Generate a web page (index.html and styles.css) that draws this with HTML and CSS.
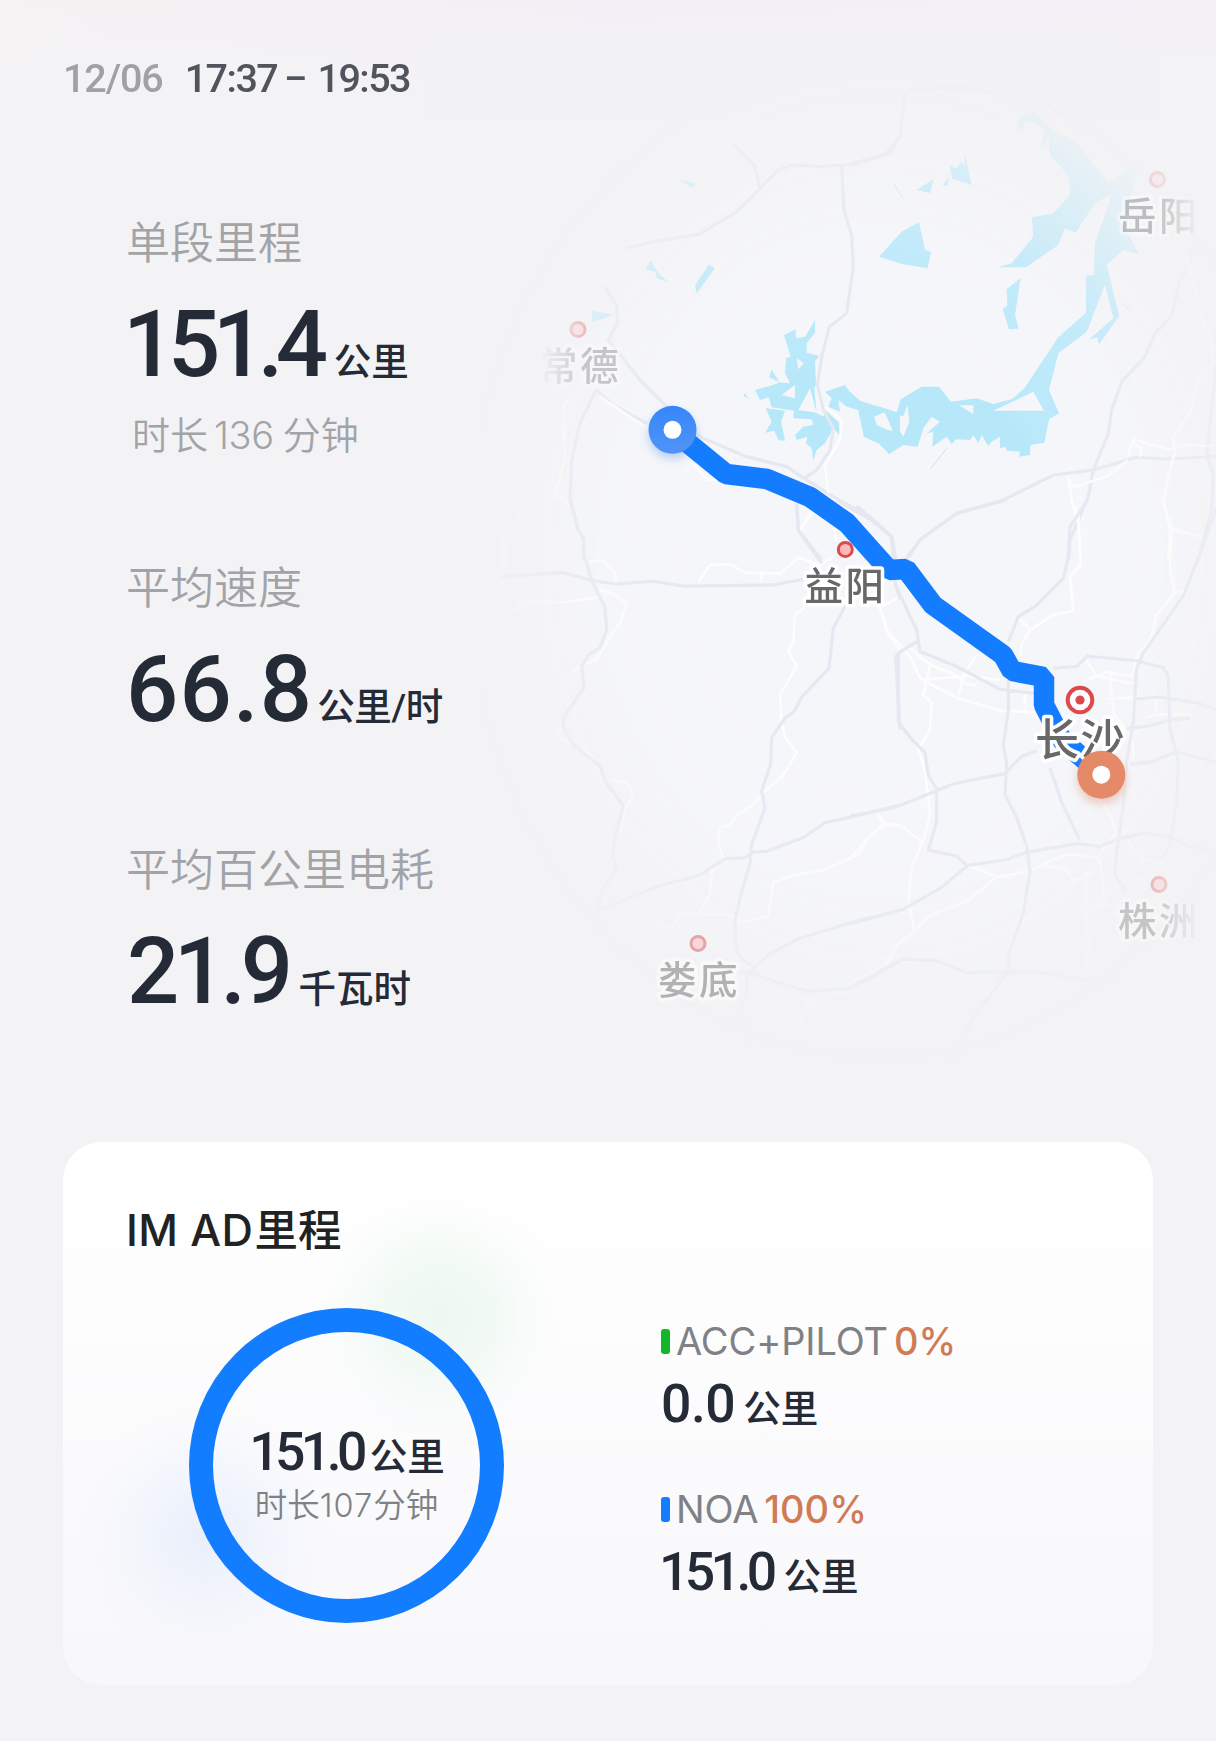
FILE: index.html
```html
<!DOCTYPE html>
<html lang="zh-CN">
<head>
<meta charset="UTF-8">
<meta name="viewport" content="width=device-width, initial-scale=1.0">
<title>行程详情</title>
<link rel="stylesheet" href="styles.css">
</head>
<body>
<svg class="map" viewBox="480 40 736 1080" width="736" height="1080">
    <defs>
        <radialGradient id="fade" gradientUnits="userSpaceOnUse" cx="0" cy="0" r="1" gradientTransform="translate(880 560) scale(430 515)">
            <stop offset="0.4" stop-color="#fff"/>
            <stop offset="0.65" stop-color="#fff" stop-opacity="0.8"/>
            <stop offset="0.8" stop-color="#fff" stop-opacity="0.42"/>
            <stop offset="0.9" stop-color="#fff" stop-opacity="0.2"/>
            <stop offset="1" stop-color="#fff" stop-opacity="0"/>
        </radialGradient>
        <linearGradient id="sides" gradientUnits="userSpaceOnUse" x1="540" y1="0" x2="1200" y2="0">
            <stop offset="0" stop-color="#fff" stop-opacity="0"/>
            <stop offset="0.07" stop-color="#fff"/>
            <stop offset="0.93" stop-color="#fff"/>
            <stop offset="1" stop-color="#fff" stop-opacity="0"/>
        </linearGradient>
        <linearGradient id="startFill" x1="0" y1="0" x2="0" y2="1">
            <stop offset="0" stop-color="#3787fa"/>
            <stop offset="1" stop-color="#5093f6"/>
        </linearGradient>
        <mask id="mapMask" maskUnits="userSpaceOnUse" x="480" y="40" width="736" height="1080">
            <rect x="480" y="40" width="736" height="1080" fill="url(#fade)"/>
        </mask>
        <mask id="labelMask" maskUnits="userSpaceOnUse" x="480" y="40" width="736" height="1080">
            <rect x="480" y="40" width="736" height="1080" fill="url(#sides)"/>
        </mask>
    </defs>

    <g mask="url(#mapMask)">
        <rect x="480" y="40" width="736" height="1080" fill="#f5f6fa"/>

        <!-- north west tile -->
        <g transform="translate(500 60) scale(0.33333)">
            <g class="water">
                <path d="M852 825L887 808L888 835L915 830L945 780V818L920 850V878L957 887L945 905L948 975L943 985L950 1060L972 1070L975 1050L1015 1085L1022 1130L1000 1105L975 1150L950 1170L940 1203L935 1165L918 1150L922 1130L890 1140L885 1125L910 1100L940 1095L935 1078L880 1075L882 1052L815 1042L806 1012L780 1020L765 990L820 975L838 967L870 970L855 940L858 895L872 890ZM890 895L912 910L895 928ZM885 975L845 1005L885 1015ZM930 985L895 1050L950 1058Z" fill-rule="evenodd"/>
                <path d="M815 928L838 967L808 952ZM797 1045L855 1052L843 1085L855 1142L835 1140L823 1112L795 1118L815 1085ZM730 1008L735 1000L744 1015Z"/>
                <path d="M975 995L1035 975L1070 1025L1140 1040L1200 1060V1160L1165 1182L1150 1155L1092 1130L1075 1050L1040 1040L1015 1020L1020 1055L985 1040L995 1015ZM1122 1070L1152 1055L1185 1115L1130 1100Z" fill-rule="evenodd"/>
                <path d="M452 600L475 640L505 667L470 655L468 637L436 628ZM627 614L645 625L590 700L585 675ZM275 752L342 764L276 787ZM530 355L587 370L580 386Z"/>
            </g>
            <g class="road">
                <path d="M380 565L460 545L600 522L710 455L780 385L835 330L875 315L960 320L1070 312L1170 280L1200 230M700 250L765 320L780 385M1025 318L1032 450L1055 525L1060 620L1040 760L988 800L965 890L952 975L970 1050L1000 1105L990 1170L950 1230L912 1255M315 680L350 740L352 790L325 840L420 960L495 1035L600 1130L740 1190L860 1220L912 1255L1000 1310L1110 1370L1175 1430L1185 1500M288 990L340 1035L440 1090M288 990L240 1090L215 1200L210 1310L235 1410L252 1440V1500M890 1330L895 1410L965 1500"/>
            </g>
            <g class="street">
                <path d="M210 1010L190 1040L195 1200L165 1300L200 1330M300 1010L450 1110M580 1210L620 1258L650 1260M975 1040L1025 1080L1020 1140L975 1215L985 1300M940 1355L900 1410M1000 1400L1010 1445"/>
            </g>
        </g>

        <!-- north east tile -->
        <g transform="translate(850 60) scale(0.33333)">
            <g class="water">
                <path d="M503 180L545 147L600 205L680 245L775 370L870 308L840 420L805 475L870 585L820 570L770 615L808 768L747 853L742 832L718 838L790 775L765 675L710 815L625 880L597 990L627 1060L597 1078L583 1148L542 1155L540 1185L508 1190L510 1175L470 1172L468 1160L450 1165V1130L425 1145L415 1158L395 1125L385 1150L370 1125L360 1140L318 1138L305 1152L290 1130L247 1160L250 1115L230 1120L270 1085L245 1070L220 1105L203 1160L160 1155L118 1182L85 1150L42 1130L25 1050L0 1035V995L30 1022L108 1048L160 1130L178 1085L173 1035L160 1068L137 1066L152 1018L215 980H267L303 1025L380 1015L430 1032L487 1017L523 985L625 832L708 758V648L732 645L735 550L788 400L735 430L677 518L645 505L625 555L528 622L445 622L485 610L550 530L545 472L610 460L660 405L658 350L600 285L595 230L572 270L585 210L550 187L525 185L522 208L505 207ZM72 1070L105 1055L130 1118L80 1095ZM327 1036H370V1062ZM430 1052L550 995L582 1052Z" fill-rule="evenodd"/>
                <path d="M87 590L155 515L207 487L225 570L243 575L233 625L155 612ZM470 688L512 653L495 765L506 806L477 808L458 748L472 735ZM298 315L318 325L335 305L342 320L345 283L365 374L307 356ZM200 390L252 356L240 399ZM278 376L295 352L294 378Z"/>
            </g>
            <path class="thread" d="M130 368L158 415M243 1225L290 1165M820 735L838 748"/>
            <g class="road">
                <path d="M0 312L110 280L150 230L165 100L180 90L330 80L460 105L540 95L690 210M1025 560L1015 630L990 660L965 770L915 820L885 890L815 965L785 1050L775 1120L730 1230L715 1310L660 1440L655 1500M1098 920L1070 1190L1090 1240L1085 1350L1045 1500M0 1345L60 1375L125 1432L132 1500M170 1500L210 1440L320 1360L460 1320L610 1245L730 1230L860 1192L940 1197L1098 1190"/>
            </g>
            <g class="street">
                <path d="M1000 540L1020 630L1050 760L1085 840V915L1040 970L1025 1050L970 1130L975 1175L955 1250L940 1320L960 1410L955 1500M995 665L1070 697M1098 1158L1010 1155L960 1168L910 1155L850 1138L835 1185M845 1150L875 1165L870 1190M835 1200L770 1250L670 1280L655 1255L665 1320L685 1390L692 1500M960 1410L1055 1430"/>
            </g>
        </g>

        <!-- south west tile -->
        <g transform="translate(500 500) scale(0.33333 0.38268)">
            <g class="street">
                <path d="M270 160L310 158L345 190L350 215M300 235L340 245L380 270L360 320L325 365L290 415L245 435L215 450M30 290L100 265L200 267L290 255M185 590L175 620L270 665M330 730L385 740L400 770L375 810L360 870M595 215L630 170L690 168L735 190L840 192L895 150L960 170L1005 145M785 195V215M935 30L900 75M915 280L885 300L880 370L865 395L890 435L840 510L845 580L855 620L890 660L850 720L790 765L755 800L715 820L690 850L660 855L655 900L670 935L635 970L630 1030L600 1075M310 1140L390 1110L520 1115L535 1080L680 1083L730 1103L805 1088L820 1000L880 980L960 970L1080 925L1095 890L1150 850L1135 820M1150 850H1200M530 1090L545 1140M1140 280L1165 350L1200 395M920 1290L925 1320L880 1400L850 1450L790 1480M930 1320L1040 1280L1160 1215L1200 1155M625 1300V1340L740 1390M1140 280L1195 255"/>
            </g>
            <g class="road">
                <path d="M210 0L235 80L252 100L250 140L275 210L315 280L320 340L300 385L265 405L245 435L252 490L190 570V595L220 640L300 695L315 735L370 800L345 880L338 930L350 960L300 1030L285 1120M0 200L190 190L275 210L350 220L460 212L550 225L820 222L910 207M1040 270L1000 335L987 440L905 515L885 550L855 570L815 620L812 690L785 760L795 805L755 900L750 950L720 1040L705 1100L708 1170L720 1195L762 1222L740 1250V1290L725 1330L735 1370L755 1450L762 1520M290 1075L470 1010L600 980L675 937L735 935L760 920L800 918L910 882L975 843L1070 825L1200 797M762 1222L810 1185L900 1145L1070 1100L1200 1072M715 1233L762 1238L830 1260L920 1283L1040 1278L1110 1250L1200 1205M725 1330L680 1385L600 1445M890 10L895 80L965 165M1010 0L1110 50L1175 95L1187 155M1175 180L1200 260M1200 395L1187 410L1200 600"/>
            </g>
        </g>

        <!-- south east tile -->
        <g transform="translate(850 500) scale(0.33333 0.38268)">
            <g class="street">
                <path d="M662 0L685 40L692 170L660 200L670 290L610 300L540 340L515 375L510 405M510 310L540 340M85 270L110 340L180 410L210 465L250 485L330 520L450 550L555 555M175 385L240 430L310 455L350 480L380 485M240 430L220 510L245 530L240 600L205 650L225 710L240 820L220 890L185 960L175 1050L190 1110L190 1130L130 1170L100 1220L0 1260M380 405L345 450L325 510M215 470L350 460L450 470M525 500V550M0 935L60 880L100 845L150 850L220 895M85 820L100 845M355 955L440 985L540 970L610 940L660 925L740 935L800 870L780 820L745 780M440 985L350 1050L240 1085L190 1130M580 955L650 965L670 995L730 975M710 970L705 1080L715 1150L710 1250M750 940L765 1050L720 1065M935 0L965 70L960 180L975 240L920 300L900 370L865 400L845 460L770 450L700 475M710 420L740 460L850 480M780 450L790 560L830 600L850 640V680M770 520L850 515L920 520L915 560H1030M965 240H1000M965 75L1050 95M890 570L920 560M830 890L880 940L960 950L1010 1000M830 1010L890 985L880 940M790 1060L740 1065"/>
            </g>
            <g class="road">
                <path d="M20 15L125 95L130 150M170 150L215 100L320 35L470 0M712 0L660 70L655 150L640 205L560 275L505 305L475 370M135 220L200 340L210 395L320 435L450 495L555 505M200 370L145 400V580L185 625L225 660L235 720L260 755V840L235 915L320 930L350 955L470 940L530 920L685 898L750 905L810 885L880 870L960 880L1020 905L1098 915M475 470V550L460 640L470 690L465 770L500 830L530 905L540 970L520 1080L475 1190V1230L390 1330L315 1430L290 1520M0 825L130 805L310 742L330 738L465 715L515 670L560 655M600 700L635 790L690 890M610 440L680 435L712 408L860 420L940 438L955 460L960 600L985 680L980 790L960 900L935 940M1098 25L1050 140L1000 250L880 400L860 440L850 580L830 680L820 800L800 920L795 980L825 1020M850 520L930 515L1040 530L1098 548M830 598L900 590L960 575L1020 570M840 690L900 685L980 658L1098 685M0 1108L160 1070L270 1015L350 957M0 1275L155 1200L255 1203L350 1235L470 1233L560 1233L700 1253L810 1250"/>
            </g>
        </g>
    </g>
    <path class="route" d="M672 430L726 474L767 479L810 497L847 523L889 570L906 569L933 605L1003 655L1012 671L1044 677V705L1062 740L1101 774"/>

    <g mask="url(#labelMask)">
        <g class="city faint">
            <circle cx="1157.5" cy="179.5" r="7"/>
            <text class="dim" x="1118" y="229.5">岳阳</text>
        </g>
        <g class="city dim">
            <circle cx="578" cy="329.5" r="7"/>
            <text x="539" y="379.5">常德</text>
        </g>
        <g class="city">
            <circle cx="845.3" cy="549.5" r="7"/>
            <text x="804.5" y="600">益阳</text>
        </g>
        <g class="city half">
            <circle cx="698" cy="943.5" r="7"/>
            <text x="658" y="994">娄底</text>
        </g>
        <g class="city dim">
            <circle cx="1159" cy="884.5" r="7"/>
            <text x="1118" y="934.5">株洲</text>
        </g>
        <g class="city capital">
            <circle cx="1080" cy="700" r="12.3"/>
            <circle class="core" cx="1080" cy="700" r="4.6"/>
            <text x="1035" y="755.5">长沙</text>
        </g>
    </g>

    <g class="pin start">
        <circle cx="672.5" cy="429.8" r="24" fill="url(#startFill)"/>
        <circle cx="672.5" cy="429.8" r="9" fill="#fff"/>
    </g>
    <g class="pin end">
        <circle cx="1101.3" cy="774.7" r="24" fill="#e58a68"/>
        <circle cx="1101.3" cy="774.7" r="9" fill="#fff"/>
    </g>
</svg>

<header class="trip-time">
    <span class="date">12/06</span>
    <span class="time">17:37 <span class="dash">–</span> 19:53</span>
</header>

<section class="stats">
    <div class="stat">
        <h2>单段里程</h2>
        <p class="value mileage"><b>151.4</b><span class="unit">公里</span></p>
        <p class="duration">时长<span class="minutes">136</span>分钟</p>
    </div>
    <div class="stat">
        <h2>平均速度</h2>
        <p class="value speed"><b>66.8</b><span class="unit">公里/时</span></p>
    </div>
    <div class="stat">
        <h2>平均百公里电耗</h2>
        <p class="value energy"><b>21.9</b><span class="unit">千瓦时</span></p>
    </div>
</section>

<section class="card">
    <h3><span class="latin">IM AD</span>里程</h3>
    <div class="card-body">
        <div class="ring">
            <p class="distance tight"><b>151.0</b><span class="unit">公里</span></p>
            <p class="ring-time">时长<span>107</span>分钟</p>
        </div>
        <div class="legend">
            <div class="mode">
                <p class="mode-name"><i class="bar green"></i><span class="name">ACC+PILOT</span><em>0%</em></p>
                <p class="distance"><b>0.0</b><span class="unit">公里</span></p>
            </div>
            <div class="mode">
                <p class="mode-name"><i class="bar blue"></i><span class="name">NOA</span><em>100%</em></p>
                <p class="distance tight"><b>151.0</b><span class="unit">公里</span></p>
            </div>
        </div>
    </div>
</section>
</body>
</html>
```

FILE: styles.css
```css
* {
    box-sizing: border-box;
    margin: 0;
    padding: 0;
}
body {
    position: relative;
    width: 1216px;
    height: 1741px;
    overflow: hidden;
    padding: 0 63px;
    font-family: Roboto, "Noto Sans CJK SC", sans-serif;
    color: #242a36;
    background: linear-gradient(180deg, rgba(243,243,245,0) 0, #f3f3f5 130px), linear-gradient(90deg, #f5f2f3, #f2f0f6 50%, #f3f1f6);
}
b, em, i {
    font-style: normal;
}

/* map behind the figures */
.map {
    position: absolute;
    left: 480px;
    top: 40px;
}
.water {
    fill: #b7e8fa;
}
.road, .street, .thread {
    fill: none;
    stroke-linejoin: round;
}
.road path, .street path, .thread {
    vector-effect: non-scaling-stroke;
}
.road {
    stroke: #e5e8f1;
    stroke-width: 3.2px;
}
.street {
    stroke: #fdfdfe;
    stroke-width: 2.6px;
}
.thread {
    stroke: #c9e6f2;
    stroke-width: 1px;
}
.route {
    fill: none;
    stroke: #137cff;
    stroke-width: 20.5px;
    stroke-linejoin: bevel;
}
.city circle {
    fill: #fbb9bb;
    stroke: #dc4a4c;
    stroke-width: 3px;
}
.city text {
    font-family: "Noto Sans CJK SC", sans-serif;
    font-size: 38.5px;
    font-weight: 500;
    letter-spacing: 2.5px;
    fill: #686868;
    stroke: #fff;
    stroke-width: 7px;
    stroke-linejoin: round;
    paint-order: stroke;
}
.city.half {
    opacity: 0.47;
}
.city.dim {
    opacity: 0.33;
}
.city.faint circle {
    opacity: 0.16;
}
.city text.dim {
    opacity: 0.38;
}
.city.capital circle {
    fill: #fff;
    stroke-width: 4px;
}
.city.capital .core {
    fill: #dc4a4c;
    stroke: none;
}
.city.capital text {
    font-size: 44px;
    letter-spacing: 1.5px;
}
.pin.start {
    filter: drop-shadow(0 5px 5px rgba(50,120,220,0.3));
}
.pin.end {
    filter: drop-shadow(0 5px 5px rgba(220,110,70,0.35));
}

/* trip time */
.trip-time {
    position: relative;
    display: flex;
    gap: 22px;
    padding-top: 56px;
    height: 216px;
    font-size: 39.5px;
    line-height: 46px;
    font-weight: 500;
    letter-spacing: -1.1px;
}
.date {
    color: #a1a1a5;
}
.time {
    color: #50545c;
    white-space: pre;
    letter-spacing: -1.55px;
}
.dash {
    display: inline-block;
    transform: translateX(-2px) scaleX(0.9);
}

/* figures */
.stats {
    position: relative;
    display: flex;
    flex-direction: column;
    width: 400px;
    height: 926px;
    padding-left: 64px;
}
.stat {
    height: 282px;
}
.stat:first-child {
    height: 345px;
}
.stat h2 {
    font-size: 44px;
    line-height: 56px;
    font-weight: 350;
    color: #a2a3a7;
    margin-left: -1px;
    white-space: nowrap;
}
.value {
    display: flex;
    align-items: baseline;
    margin-top: 20px;
    height: 106px;
    line-height: 106px;
    white-space: nowrap;
}
.value b {
    font-size: 92px;
    font-weight: 500;
}
.value .unit {
    position: relative;
    top: -1px;
    font-size: 37.5px;
    font-weight: 500;
}
.mileage b {
    margin: 0 13px 0 -4px;
    letter-spacing: -7.4px;
}
.speed b {
    margin: 0 4px 0 -1px;
    letter-spacing: 1.2px;
}
.speed .unit {
    letter-spacing: -0.4px;
}
.energy b {
    margin: 0 11px 0 0;
    letter-spacing: -5.5px;
}
.duration {
    padding-left: 5px;
    font-family: "Noto Sans CJK SC", sans-serif;
    font-size: 38px;
    line-height: 46px;
    margin-top: 12px;
    font-weight: 350;
    color: #a2a3a7;
    white-space: nowrap;
}
.minutes {
    font-family: Inter, sans-serif;
    font-size: 38px;
    font-weight: 300;
    margin: 0 9px 0 6px;
    letter-spacing: -0.4px;
}

/* assisted driving card */
.card {
    position: relative;
    width: 1090px;
    height: 543px;
    padding: 60px 64px 0;
    border-radius: 38px;
    background:
        radial-gradient(circle at 375px 170px, rgba(40,190,80,0.08), rgba(40,190,80,0.05) 55px, rgba(40,190,80,0.012) 100px, rgba(40,190,80,0) 130px),
        radial-gradient(circle at 142px 390px, rgba(60,130,255,0.09), rgba(60,130,255,0.05) 50px, rgba(60,130,255,0.012) 100px, rgba(60,130,255,0) 130px),
        linear-gradient(180deg, #fff 5%, #f8f8fb 95%);
}
.card h3 {
    font-size: 43.5px;
    line-height: 56px;
    font-weight: 500;
    color: #222;
    margin-left: -1px;
}
.card h3 .latin {
    font-family: Inter, sans-serif;
    letter-spacing: 0.4px;
    margin-right: 1px;
}
.card-body {
    display: flex;
    padding: 47.5px 0 0 62px;
}
.ring {
    width: 315px;
    height: 315px;
    border: 24px solid #137dff;
    border-radius: 50%;
    padding-top: 91px;
    display: flex;
    flex-direction: column;
    align-items: center;
}
.distance {
    display: flex;
    align-items: baseline;
    height: 58px;
    line-height: 58px;
    white-space: nowrap;
}
.distance b {
    font-size: 53.5px;
    font-weight: 500;
    letter-spacing: -0.5px;
    margin: 0 8px 0 0;
}
.distance.tight b {
    letter-spacing: -4.6px;
    margin: 0 11px 0 -2px;
}
.ring .distance.tight {
    padding-left: 3px;
}
.ring .distance.tight b {
    margin-right: 7px;
}
.distance .unit {
    font-size: 37.5px;
    font-weight: 500;
}
.ring-time {
    margin-top: 4px;
    font-size: 32.5px;
    line-height: 42px;
    font-weight: 350;
    color: #808185;
}
.ring-time span {
    font-family: Inter, sans-serif;
    font-weight: 300;
    letter-spacing: 1px;
}
.legend {
    padding: 10px 0 0 157px;
}
.mode {
    height: 168px;
}
.mode-name {
    display: flex;
    align-items: center;
    height: 46px;
    font-family: Inter, sans-serif;
    font-size: 38px;
    color: #808185;
    white-space: nowrap;
}
.mode-name .name {
    letter-spacing: -0.1px;
}
.mode-name em {
    margin-left: 6px;
    font-weight: 500;
    color: #d07b55;
}
.bar {
    width: 9px;
    height: 25px;
    margin: 1px 6px 0 0;
    border-radius: 3px;
}
.green {
    background: #12b629;
}
.blue {
    background: #137dff;
}
.mode .distance {
    margin-top: 11.5px;
}
```
